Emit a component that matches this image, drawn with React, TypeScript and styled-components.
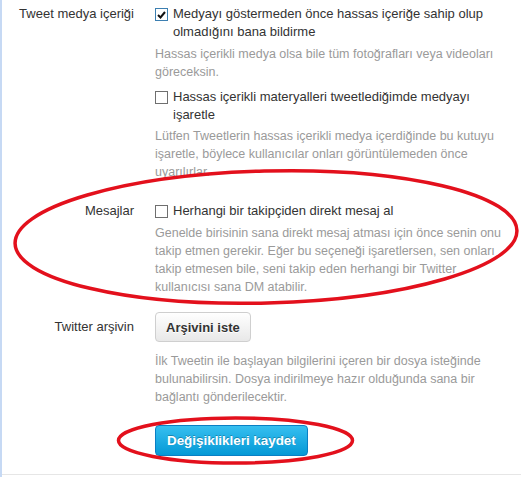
import styled, { createGlobalStyle } from "styled-components";

const GlobalStyle = createGlobalStyle`
  body {
    margin: 0;
    background: #ffffff;
    font-family: "Liberation Sans", Arial, sans-serif;
  }
`;

const Page = styled.div`
  position: relative;
  width: 521px;
  height: 477px;
  box-sizing: border-box;
  border-left: 2px solid #c6d9f4;
  padding-top: 5px;
  overflow: hidden;
`;

const BottomRule = styled.div`
  position: absolute;
  left: 0;
  right: 0;
  top: 474px;
  height: 1px;
  background: #e6e6e6;
`;

const Row = styled.div<{ $top: number }>`
  display: grid;
  grid-template-columns: 132px 352px;
  column-gap: 21px;
  margin-top: ${(p) => p.$top}px;
`;

const Label = styled.div<{ $pad?: number }>`
  text-align: right;
  font-size: 13px;
  line-height: 18px;
  color: #333;
  padding-top: ${(p) => p.$pad ?? 0}px;
`;

const Controls = styled.div`
  display: flex;
  flex-direction: column;
`;

const Option = styled.label<{ $top?: number }>`
  display: flex;
  align-items: flex-start;
  gap: 5px;
  font-size: 13px;
  line-height: 18px;
  color: #333;
  margin-top: ${(p) => p.$top ?? 0}px;
`;

const Box = styled.span<{ $checked?: boolean }>`
  flex: none;
  width: 11px;
  height: 11px;
  margin-top: 3px;
  border: 1px solid ${(p) => (p.$checked ? "#3c7fb1" : "#6f6f6f")};
  background: #fff;
  display: flex;
  align-items: center;
  justify-content: center;
`;

const Help = styled.p<{ $top: number }>`
  margin: ${(p) => p.$top}px 0 0;
  font-size: 12.5px;
  line-height: 18px;
  color: #9a9a9a;
`;

const GrayButton = styled.button`
  align-self: flex-start;
  height: 30px;
  padding: 0 10px;
  border: 1px solid #cfcfcf;
  border-radius: 4px;
  background: linear-gradient(#ffffff, #e8e8e8);
  font-family: "Liberation Sans", Arial, sans-serif;
  font-size: 13px;
  font-weight: bold;
  color: #333;
  text-shadow: 0 1px 0 #fff;
`;

const SaveButton = styled.button`
  align-self: flex-start;
  height: 31px;
  padding: 0 11px;
  border: 1px solid #0a7fc4;
  border-radius: 4px;
  background: linear-gradient(#36bff0, #0599d6);
  font-family: "Liberation Sans", Arial, sans-serif;
  font-size: 13.4px;
  font-weight: bold;
  color: #fff;
  text-shadow: 0 -1px 0 rgba(0, 0, 0, 0.25);
`;

const Marks = styled.svg`
  position: absolute;
  left: -2px;
  top: 0;
  pointer-events: none;
`;

function Checkbox({ checked }: { checked?: boolean }) {
  return (
    <Box $checked={checked}>
      {checked && (
        <svg width="9" height="8" viewBox="0 0 9 8">
          <path d="M1 4 L3.5 6.5 L8 1" fill="none" stroke="#111" strokeWidth="2" />
        </svg>
      )}
    </Box>
  );
}

export default function App() {
  return (
    <Page>
      <GlobalStyle />
      <Row $top={0}>
        <Label>Tweet medya içeriği</Label>
        <Controls>
          <Option>
            <Checkbox checked />
            <span>Medyayı göstermeden önce hassas içeriğe sahip olup olmadığını bana bildirme</span>
          </Option>
          <Help $top={4}>
            Hassas içerikli medya olsa bile tüm fotoğrafları veya videoları göreceksin.
          </Help>
          <Option $top={7}>
            <Checkbox />
            <span>Hassas içerikli materyalleri tweetlediğimde medyayı işaretle</span>
          </Option>
          <Help $top={3}>
            Lütfen Tweetlerin hassas içerikli medya içerdiğinde bu kutuyu işaretle, böylece
            kullanıcılar onları görüntülemeden önce uyarılırlar.
          </Help>
        </Controls>
      </Row>
      <Row $top={21}>
        <Label>Mesajlar</Label>
        <Controls>
          <Option>
            <Checkbox />
            <span>Herhangi bir takipçiden direkt mesaj al</span>
          </Option>
          <Help $top={4}>
            Genelde birisinin sana direkt mesaj atması için önce senin onu takip etmen gerekir.
            Eğer bu seçeneği işaretlersen, sen onları takip etmesen bile, seni takip eden
            herhangi bir Twitter kullanıcısı sana DM atabilir.
          </Help>
        </Controls>
      </Row>
      <Row $top={16}>
        <Label $pad={6}>Twitter arşivin</Label>
        <Controls>
          <GrayButton>Arşivini iste</GrayButton>
          <Help $top={10}>
            İlk Tweetin ile başlayan bilgilerini içeren bir dosya isteğinde bulunabilirsin.
            Dosya indirilmeye hazır olduğunda sana bir bağlantı gönderilecektir.
          </Help>
        </Controls>
      </Row>
      <Row $top={19}>
        <span />
        <Controls>
          <SaveButton>Değişiklikleri kaydet</SaveButton>
        </Controls>
      </Row>
      <BottomRule />
      <Marks width="521" height="477" viewBox="0 0 521 477">
        <ellipse
          cx="266"
          cy="237"
          rx="251"
          ry="66"
          fill="none"
          stroke="#e3101c"
          strokeWidth="3.5"
          transform="rotate(-1.5 266 237)"
        />
        <ellipse
          cx="235.5"
          cy="440.5"
          rx="117"
          ry="22.5"
          fill="none"
          stroke="#e3101c"
          strokeWidth="3.5"
        />
      </Marks>
    </Page>
  );
}
